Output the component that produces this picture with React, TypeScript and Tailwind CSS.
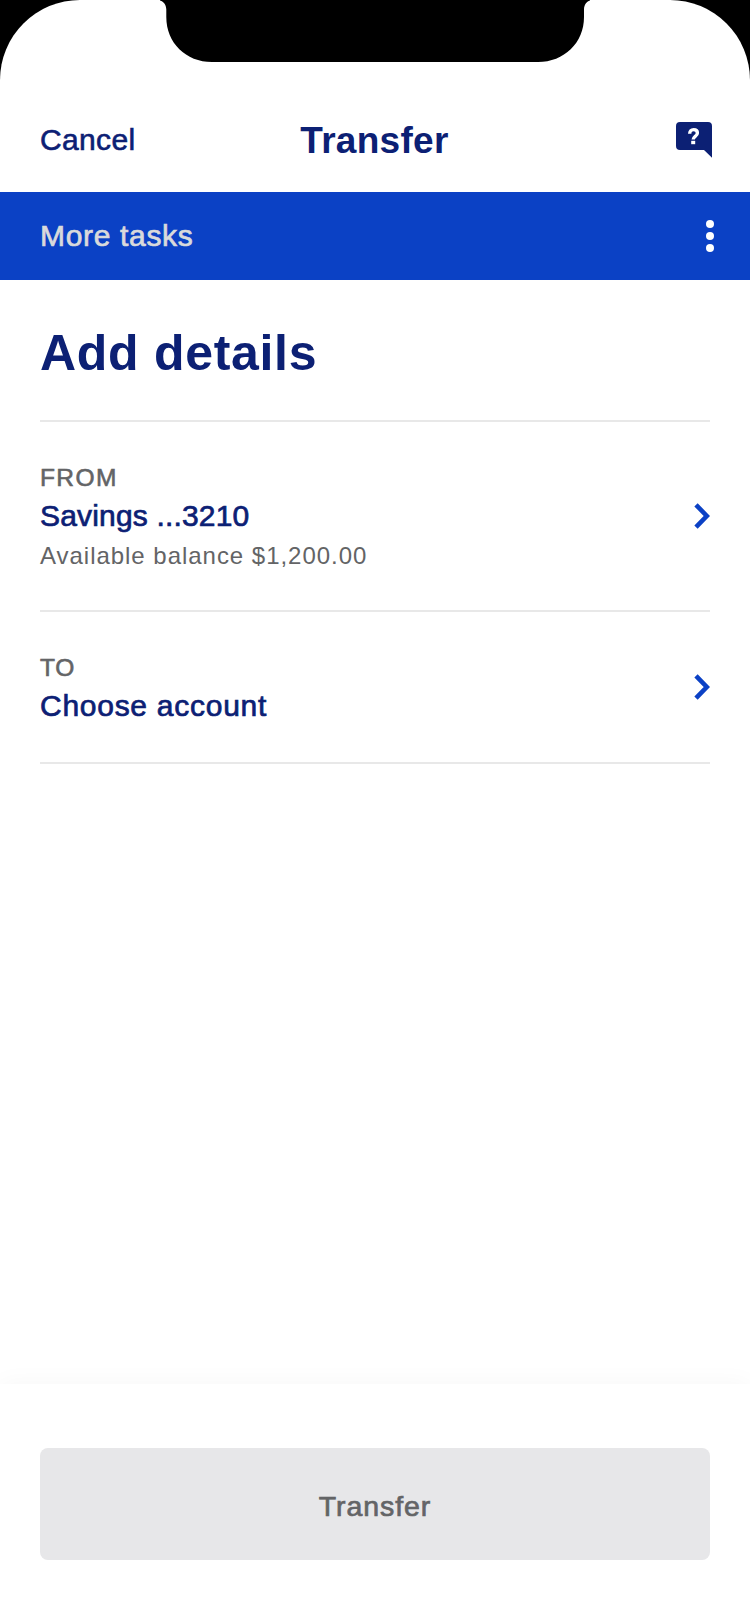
import type { ReactNode } from "react";

function Notch() {
  return (
    <svg className="block h-[62px] w-[430px]" viewBox="0 0 430 62" fill="#000" aria-hidden="true">
      <path d="M-3.5 0C2.5 0 6.3 4 6.3 9.5V17C6.3 43 26 62 52 62H378C404 62 424 43 424 17V9.5C424 4 427.8 0 433.8 0Z" />
    </svg>
  );
}

function HelpIcon() {
  return (
    <svg className="h-9 w-9" viewBox="0 0 36 36" aria-hidden="true">
      <path
        d="M4 0H32a4 4 0 0 1 4 4V35.7L28 28H4a4 4 0 0 1-4-4V4a4 4 0 0 1 4-4Z"
        fill="#0c2074"
      />
      <path
        d="M13.7 11.8C13.7 8.9 15.3 7.6 17.6 7.6C19.9 7.6 21.4 8.9 21.4 10.9C21.4 12.6 20.5 13.3 19.2 14.4C18 15.4 17.2 16 17.2 17.6"
        fill="none"
        stroke="#fff"
        strokeWidth="3.4"
      />
      <rect x="15.2" y="18.8" width="4" height="3.4" fill="#fff" />
    </svg>
  );
}

function Chevron() {
  return (
    <svg className="h-[26px] w-4" viewBox="0 0 16 26" fill="none" aria-hidden="true">
      <path d="M2 1.8L12.8 13L2 24.2" stroke="#0b41c5" strokeWidth="4.6" />
    </svg>
  );
}

function AccountRow({ label, className, children }: { label: string; className: string; children: ReactNode }) {
  return (
    <button
      className={`flex w-full items-center justify-between border-b-2 border-[#e8e8e8] text-left ${className}`}
    >
      <span className="flex flex-col pt-1">
        <span
          className={`text-[24.5px] leading-[30px] text-[#636466] [-webkit-text-stroke:0.6px_#636466] ${
            label === "TO" ? "tracking-[0.8px]" : "tracking-[1.4px]"
          }`}
        >
          {label}
        </span>
        {children}
      </span>
      <Chevron />
    </button>
  );
}

export default function App() {
  return (
    <div className="h-[1624px] w-[750px] bg-black font-['Liberation_Sans',Arial,sans-serif]">
      <div className="flex h-full flex-col overflow-hidden rounded-t-[80px] bg-white">
        <div className="flex h-[88px] items-start justify-center">
          <Notch />
        </div>

        <header className="grid h-[104px] grid-cols-3 items-center px-10">
          <button className="justify-self-start text-[30px] leading-9 tracking-[0.35px] text-[#0c2074] [-webkit-text-stroke:0.6px_#0c2074]">
            Cancel
          </button>
          <h1 className="justify-self-center pt-px pr-px text-[37px] leading-10 font-bold tracking-[0.3px] text-[#0c2074]">
            Transfer
          </h1>
          <button className="-mr-0.5 justify-self-end" aria-label="Help">
            <HelpIcon />
          </button>
        </header>

        <div className="flex h-[88px] items-center justify-between bg-[#0b41c5] pr-9 pl-10">
          <span className="text-[30px] leading-9 tracking-[0.67px] text-[#d9dadb] [-webkit-text-stroke:0.7px_#d9dadb]">
            More tasks
          </span>
          <button className="flex flex-col gap-1" aria-label="More options">
            <span className="size-2 rounded-full bg-white" />
            <span className="size-2 rounded-full bg-white" />
            <span className="size-2 rounded-full bg-white" />
          </button>
        </div>

        <main className="flex-1 px-10">
          <div className="flex h-[142px] items-center border-b-2 border-[#e8e8e8] pt-1.5">
            <h2 className="text-[50px] leading-[60px] font-bold tracking-[0.7px] text-[#0c2074]">Add details</h2>
          </div>
          <AccountRow label="FROM" className="h-[190px]">
            <span className="mt-[3px] text-[30px] leading-10 tracking-[0.17px] text-[#0c2074] [-webkit-text-stroke:0.7px_#0c2074]">
              Savings ...3210
            </span>
            <span className="mt-0.5 text-[24px] leading-9 tracking-[0.97px] text-[#636466]">
              Available balance $1,200.00
            </span>
          </AccountRow>
          <AccountRow label="TO" className="h-[152px]">
            <span className="mt-[3px] text-[30px] leading-10 tracking-[0.73px] text-[#0c2074] [-webkit-text-stroke:0.7px_#0c2074]">
              Choose account
            </span>
          </AccountRow>
        </main>

        <footer className="h-60 bg-white px-10 pt-16 shadow-[0_0_24px_rgba(0,0,0,0.04)]">
          <button className="flex h-28 w-full items-center justify-center rounded-lg bg-[#e7e7e9] pt-1 text-[28.5px] tracking-[0.9px] text-[#636466] [-webkit-text-stroke:0.7px_#636466]">
            Transfer
          </button>
        </footer>
      </div>
    </div>
  );
}
